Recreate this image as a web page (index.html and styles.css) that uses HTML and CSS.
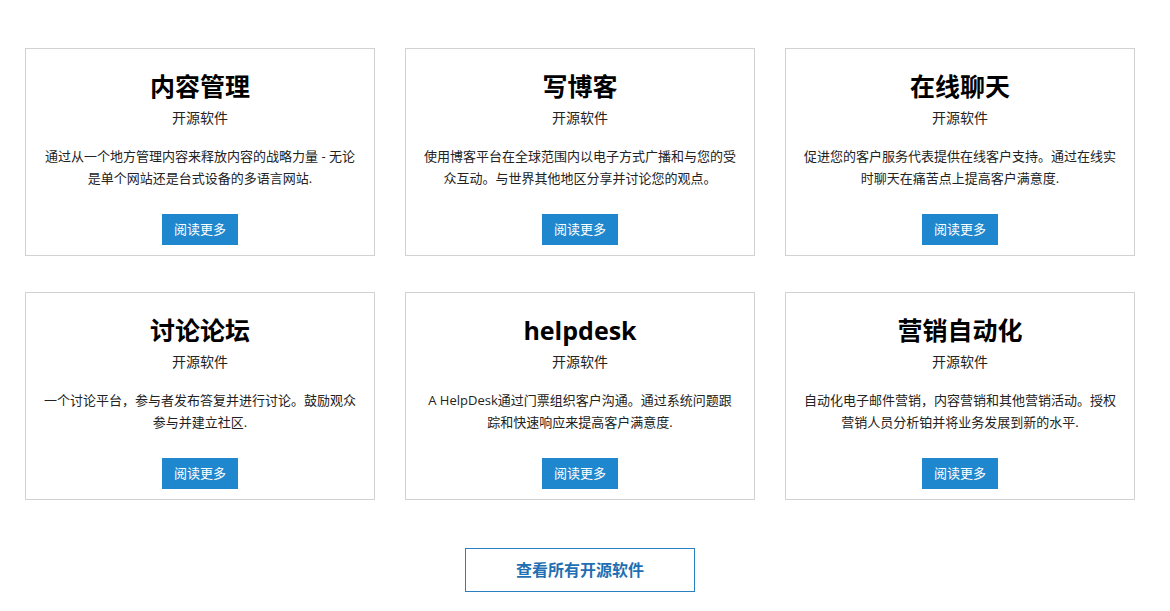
FILE: index.html
```html
<!DOCTYPE html>
<html lang="zh-CN">
<head>
<meta charset="utf-8">
<title>开源软件</title>
<link rel="stylesheet" href="styles.css">
</head>
<body>
<div class="page">
  <div class="grid">
    <div class="card">
      <h2 class="title">内容管理</h2>
      <div class="sub">开源软件</div>
      <p class="desc">通过从一个地方管理内容来释放内容的战略力量 - 无论<br>是单个网站还是台式设备的多语言网站.</p>
      <a class="btn" href="#">阅读更多</a>
    </div>
    <div class="card">
      <h2 class="title">写博客</h2>
      <div class="sub">开源软件</div>
      <p class="desc">使用博客平台在全球范围内以电子方式广播和与您的受<br>众互动。与世界其他地区分享并讨论您的观点。</p>
      <a class="btn" href="#">阅读更多</a>
    </div>
    <div class="card">
      <h2 class="title">在线聊天</h2>
      <div class="sub">开源软件</div>
      <p class="desc">促进您的客户服务代表提供在线客户支持。通过在线实<br>时聊天在痛苦点上提高客户满意度.</p>
      <a class="btn" href="#">阅读更多</a>
    </div>
    <div class="card">
      <h2 class="title">讨论论坛</h2>
      <div class="sub">开源软件</div>
      <p class="desc">一个讨论平台，参与者发布答复并进行讨论。鼓励观众<br>参与并建立社区.</p>
      <a class="btn" href="#">阅读更多</a>
    </div>
    <div class="card">
      <h2 class="title">helpdesk</h2>
      <div class="sub">开源软件</div>
      <p class="desc">A HelpDesk通过门票组织客户沟通。通过系统问题跟<br>踪和快速响应来提高客户满意度.</p>
      <a class="btn" href="#">阅读更多</a>
    </div>
    <div class="card">
      <h2 class="title">营销自动化</h2>
      <div class="sub">开源软件</div>
      <p class="desc">自动化电子邮件营销，内容营销和其他营销活动。授权<br>营销人员分析铂并将业务发展到新的水平.</p>
      <a class="btn" href="#">阅读更多</a>
    </div>
  </div>
  <div class="more-wrap">
    <a class="more" href="#">查看所有开源软件</a>
  </div>
</div>
</body>
</html>
```

FILE: styles.css
```css
* { box-sizing: border-box; }
html, body { margin: 0; padding: 0; background: #fff; }
body {
  font-family: "Open Sans", "Noto Sans CJK SC", sans-serif;
  color: #333;
}
.page {
  width: 1170px;
  padding: 48px 35px 0 25px;
}
.grid {
  display: grid;
  grid-template-columns: repeat(3, 350px);
  column-gap: 30px;
  row-gap: 36px;
}
.card {
  border: 1px solid #d2d2d2;
  height: 208px;
  padding: 22px 8px 0;
  display: flex;
  flex-direction: column;
  align-items: center;
  text-align: center;
}
.title {
  margin: 0;
  font-size: 25px;
  line-height: 30px;
  font-weight: 700;
  color: #000;
}
.sub {
  margin-top: 7px;
  font-size: 14px;
  line-height: 20px;
  color: #222;
}
.desc {
  margin: 17px 0 0;
  font-size: 13px;
  line-height: 22px;
  color: #222;
  white-space: nowrap;
}
.btn {
  margin-top: 25px;
  display: block;
  width: 76px;
  height: 31px;
  line-height: 31px;
  background: #1e87cd;
  color: #fff;
  font-size: 13px;
  text-decoration: none;
}
.more-wrap {
  display: flex;
  justify-content: center;
  margin-top: 48px;
}
.more {
  display: block;
  width: 230px;
  height: 44px;
  line-height: 42px;
  border: 1px solid #2a7fc0;
  color: #1f6fb2;
  font-size: 16px;
  font-weight: 700;
  text-align: center;
  text-decoration: none;
}
```
